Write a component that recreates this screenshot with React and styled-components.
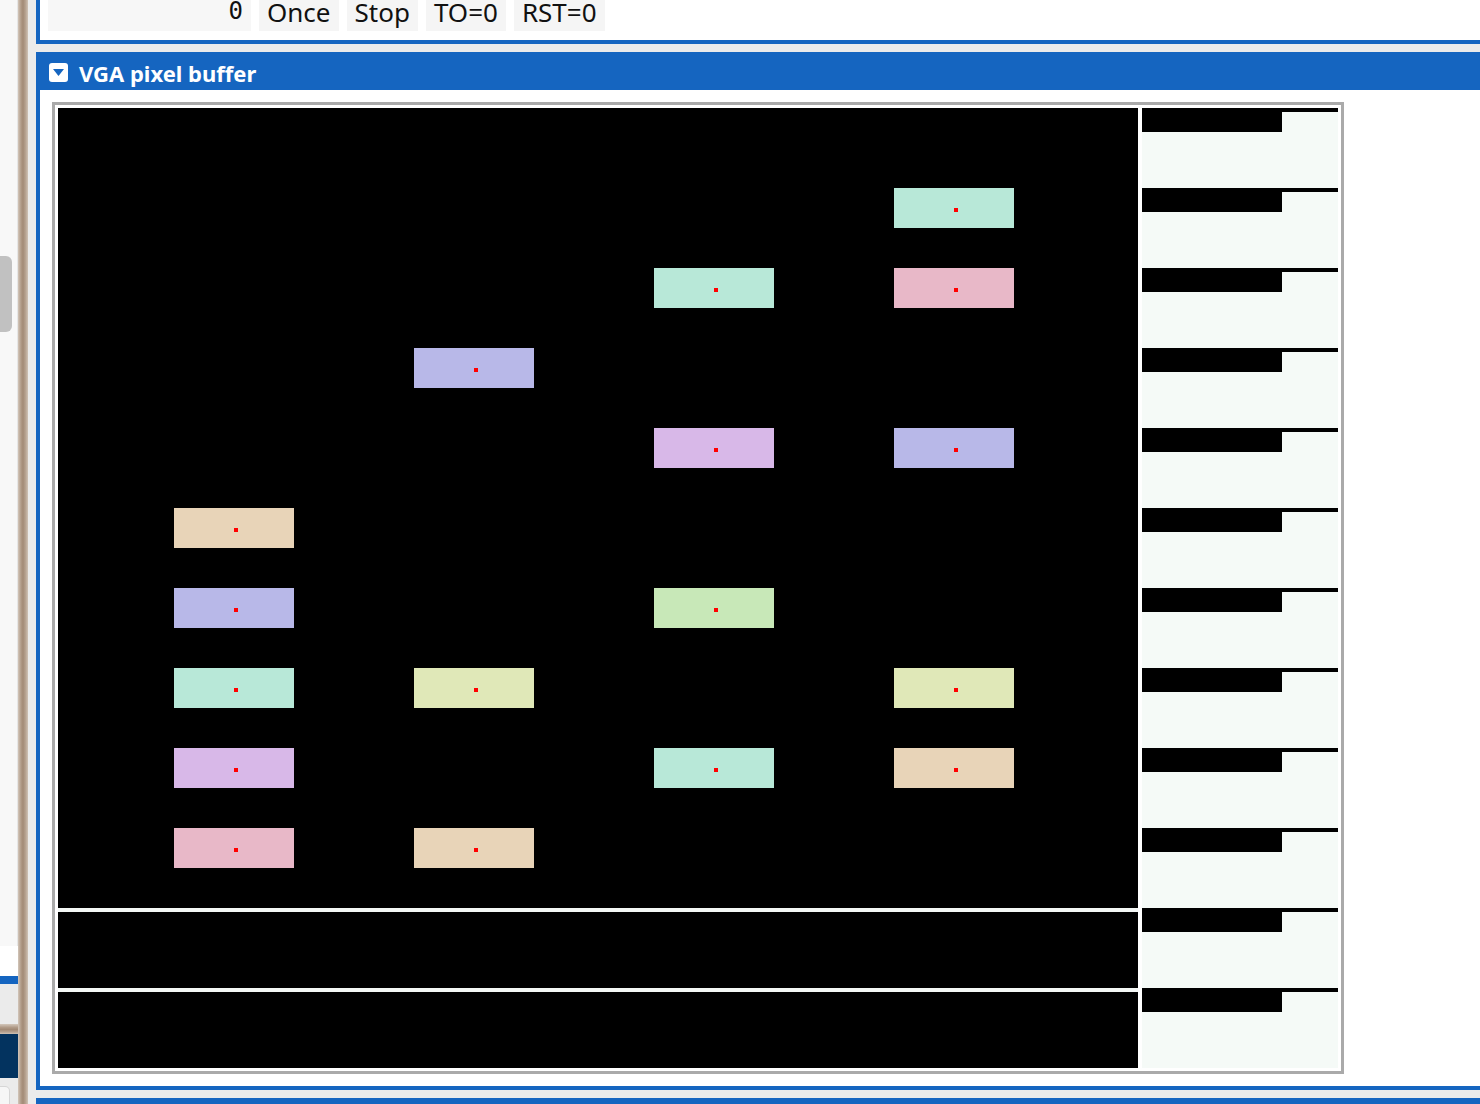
import React from "react";
import styled, { createGlobalStyle } from "styled-components";

const BLUE = "#1565c0";

const Global = createGlobalStyle`
  html, body { margin: 0; padding: 0; }
  body {
    width: 1480px;
    height: 1104px;
    overflow: hidden;
    background: #ebebeb;
    font-family: "Noto Sans", "Open Sans", sans-serif;
  }
`;

const Page = styled.div`
  display: flex;
  width: 1480px;
  height: 1104px;
  overflow: hidden;
`;

const Sidebar = styled.div`
  width: 18px;
  flex: none;
  display: flex;
  flex-direction: column;
  background: #ebebeb;
  overflow: hidden;
`;

const SideScroll = styled.div`
  height: 946px;
  flex: none;
  background: #f8f8f8;
  box-sizing: border-box;
  border-right: 1px solid #e6e6e6;
  padding-top: 256px;
`;

const Thumb = styled.div`
  width: 12px;
  height: 76px;
  background: #c1c1c1;
  border-radius: 0 6px 6px 0;
`;

const SideBand = styled.div`
  height: ${(p) => p.$h}px;
  background: ${(p) => p.$bg};
  flex: none;
`;

const HSplit = styled.div`
  height: 10px;
  flex: none;
  background: linear-gradient(to bottom, #d3c7bb, #b09a87 35%, #a28a76 55%, #b6a290 80%, #cfc2b6);
`;

const SideFoot = styled.div`
  flex: 1;
  min-height: 0;
  background: #ebebeb;
  padding-top: 8px;
`;

const SideChip = styled.div`
  width: 9px;
  height: 30px;
  background: #f6f6f6;
  border: 1px solid #d6d6d6;
  border-left: none;
  border-radius: 0 5px 0 0;
`;

const VSplit = styled.div`
  width: 10px;
  flex: none;
  background: linear-gradient(to right, #d3c7bb, #b09a87 30%, #a28a76 50%, #b6a290 75%, #cfc2b6);
`;

const Main = styled.div`
  flex: 1;
  display: flex;
  flex-direction: column;
  padding-left: 8px;
  background: #ebebeb;
  min-width: 0;
`;

const TopPanel = styled.div`
  background: #fff;
  border-left: 4px solid ${BLUE};
  border-bottom: 4px solid ${BLUE};
  padding: 0 0 0 8px;
  box-sizing: border-box;
  height: 44px;
  flex: none;
`;

const Row = styled.div`
  display: flex;
  gap: 8px;
  margin-top: -9px;
  height: 40px;
`;

const Field = styled.div`
  width: 203px;
  box-sizing: border-box;
  background: #f7f7f7;
  display: flex;
  align-items: center;
  justify-content: flex-end;
  padding: 0 8px 0 0;
  font-family: "DejaVu Sans Mono", "Liberation Mono", monospace;
  font-size: 24px;
  color: #111;
`;

const Btn = styled.div`
  background: #f5f5f5;
  display: flex;
  align-items: center;
  padding: 1px 8px 0;
  font-size: 26px;
  color: #111;
  line-height: 1;
`;

const Header = styled.div`
  margin-top: 8px;
  height: 38px;
  flex: none;
  box-sizing: border-box;
  padding: 3px 0 0 13px;
  background: ${BLUE};
  display: flex;
  align-items: center;
  gap: 11px;
  color: #fff;
  font-weight: 700;
  font-size: 22px;
`;

const Toggle = styled.div`
  width: 19px;
  height: 19px;
  background: #fff;
  border-radius: 3px;
  display: flex;
  align-items: center;
  justify-content: center;
`;

const Body = styled.div`
  background: #fff;
  border-left: 4px solid ${BLUE};
  border-bottom: 4px solid ${BLUE};
  padding: 12px;
  flex: none;
`;

const Frame = styled.div`
  display: inline-grid;
  grid-template-columns: 1080px 196px;
  gap: 4px;
  border: 3px solid #aaaaaa;
  padding: 3px;
  background: #fff;
  vertical-align: top;
`;

const Screens = styled.div`
  display: flex;
  flex-direction: column;
  gap: 4px;
  background: #f3f7f5;
`;

const Canvas = styled.div`
  position: relative;
  height: 800px;
  background: #000;
`;

const Strip = styled.div`
  height: 76px;
  background: #000;
`;

const Block = styled.div`
  position: absolute;
  width: 120px;
  height: 40px;
  box-sizing: border-box;
  padding: 4px 0 0 4px;
  display: flex;
  align-items: center;
  justify-content: center;
  background: ${(p) => p.$c};
`;

const Dot = styled.div`
  width: 4px;
  height: 4px;
  background: #ff0000;
`;

const Keys = styled.div`
  display: flex;
  flex-direction: column;
  background: #f5faf7;
`;

const Key = styled.div`
  height: 80px;
  border-top: 4px solid #000;
  box-sizing: border-box;
`;

const KeyBar = styled.div`
  width: 140px;
  height: 20px;
  background: #000;
`;

const COLORS = {
  mint: "#b8e8d8",
  pink: "#e8b8c8",
  blue: "#b8b8e8",
  lilac: "#d8b8e8",
  tan: "#e8d4b8",
  green: "#c8e8b8",
  olive: "#e0e8b8",
};

const COLS = [116, 356, 596, 836];

const blocks = [
  [3, 1, "mint"],
  [2, 2, "mint"],
  [3, 2, "pink"],
  [1, 3, "blue"],
  [2, 4, "lilac"],
  [3, 4, "blue"],
  [0, 5, "tan"],
  [0, 6, "blue"],
  [2, 6, "green"],
  [0, 7, "mint"],
  [1, 7, "olive"],
  [3, 7, "olive"],
  [0, 8, "lilac"],
  [2, 8, "mint"],
  [3, 8, "tan"],
  [0, 9, "pink"],
  [1, 9, "tan"],
];

export default function App() {
  return (
    <>
      <Global />
      <Page>
        <Sidebar>
          <SideScroll>
            <Thumb />
          </SideScroll>
          <SideBand $h={30} $bg="#ffffff" />
          <SideBand $h={8} $bg={BLUE} />
          <SideBand $h={40} $bg="#ebebeb" />
          <HSplit />
          <SideBand $h={44} $bg="#03335f" />
          <SideFoot>
            <SideChip />
          </SideFoot>
        </Sidebar>
        <VSplit />
        <Main>
          <TopPanel>
            <Row>
              <Field>0</Field>
              <Btn>Once</Btn>
              <Btn>Stop</Btn>
              <Btn>TO=0</Btn>
              <Btn>RST=0</Btn>
            </Row>
          </TopPanel>
          <Header>
            <Toggle>
              <svg width="11" height="7" viewBox="0 0 11 7">
                <path d="M0 0 H11 L5.5 7 Z" fill={BLUE} />
              </svg>
            </Toggle>
            <span>VGA pixel buffer</span>
          </Header>
          <Body>
            <Frame>
              <Screens>
                <Canvas>
                  {blocks.map(([c, r, col], i) => (
                    <Block
                      key={i}
                      $c={COLORS[col]}
                      style={{ left: COLS[c], top: r * 80 }}
                    >
                      <Dot />
                    </Block>
                  ))}
                </Canvas>
                <Strip />
                <Strip />
              </Screens>
              <Keys>
                {Array.from({ length: 12 }).map((_, i) => (
                  <Key key={i}>
                    <KeyBar />
                  </Key>
                ))}
              </Keys>
            </Frame>
          </Body>
          <Header />
        </Main>
      </Page>
    </>
  );
}
